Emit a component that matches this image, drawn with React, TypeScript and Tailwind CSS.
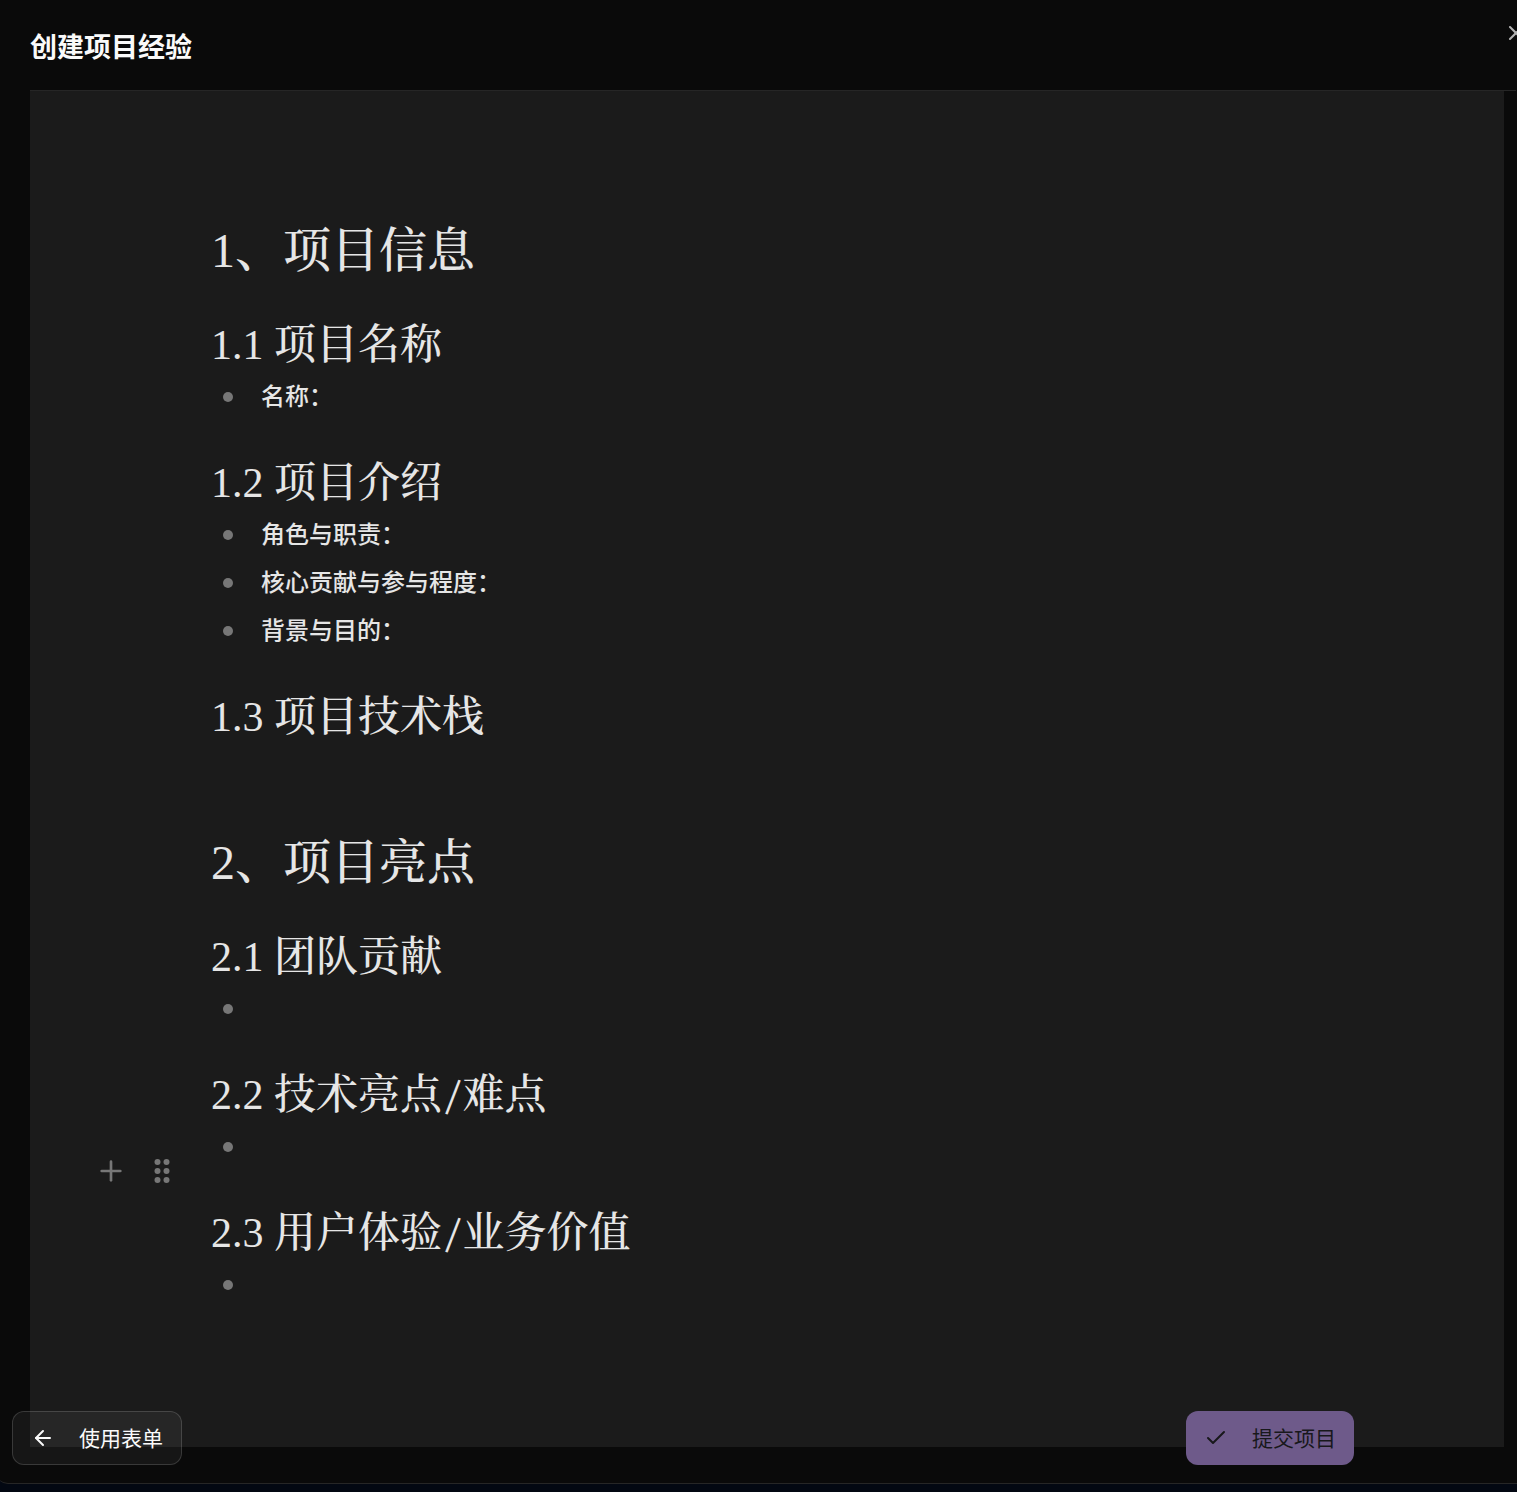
import { ArrowLeft, Check, Plus, X } from "lucide-react";

type Block = { number: string; title: string; items: string[]; handle?: boolean };
type Chapter = { number: string; title: string; blocks: Block[] };

const chapters: Chapter[] = [
  {
    number: "1",
    title: "、项目信息",
    blocks: [
      { number: "1.1 ", title: "项目名称", items: ["名称："] },
      { number: "1.2 ", title: "项目介绍", items: ["角色与职责：", "核心贡献与参与程度：", "背景与目的："] },
      { number: "1.3 ", title: "项目技术栈", items: [] },
    ],
  },
  {
    number: "2",
    title: "、项目亮点",
    blocks: [
      { number: "2.1 ", title: "团队贡献", items: [""] },
      { number: "2.2 ", title: "技术亮点/难点", items: [""] },
      { number: "2.3 ", title: "用户体验/业务价值", items: [""], handle: true },
    ],
  },
];

function DragDots() {
  return (
    <svg viewBox="0 0 16 24" className="h-6 w-4" fill="currentColor" aria-hidden="true">
      {[3, 12, 21].map((y) => (
        <g key={y}>
          <circle cx="3.5" cy={y} r="3" />
          <circle cx="12.5" cy={y} r="3" />
        </g>
      ))}
    </svg>
  );
}

function BlockHandle() {
  return (
    <div className="absolute -top-[18px] right-full mr-[31px] flex items-center gap-[15px] text-[#777777]">
      <button type="button" aria-label="添加块" className="flex size-9 items-center justify-center">
        <Plus className="size-8" strokeWidth={2} />
      </button>
      <button type="button" aria-label="拖动块" className="flex size-9 items-center justify-center">
        <DragDots />
      </button>
    </div>
  );
}

function Section({ block }: { block: Block }) {
  return (
    <section className="relative">
      {block.handle && <BlockHandle />}
      <h3 className="pt-9 font-['Cambria','Noto_Serif_CJK_SC','Noto_Sans_CJK_SC',serif] text-[42px] leading-[54px] font-medium">
        <span className="font-['Liberation_Serif',serif] leading-none">{block.number}</span>
        {block.title}
      </h3>
      {block.items.length > 0 ? (
        <ul>
          {block.items.map((item, i) => (
            <li key={i} className="flex h-12 items-center gap-7 pl-3">
              <span className="size-[10px] shrink-0 rounded-full bg-[#777777]" />
              <span className="pb-1 text-2xl font-medium">{item}</span>
            </li>
          ))}
        </ul>
      ) : (
        <p className="h-9" />
      )}
    </section>
  );
}

export default function App() {
  return (
    <div className="min-h-screen overflow-hidden bg-[#030812] pb-2 font-['Noto_Sans_CJK_SC',sans-serif]">
      <div
        role="dialog"
        aria-labelledby="dialog-title"
        className="relative -ml-1 flex min-h-[calc(100vh-8px)] flex-col rounded-bl-xl border-b border-[#262626] bg-[#0a0a0a] pr-px pb-9 pl-[34px]"
      >
        <header className="flex h-[91px] items-center border-b border-[#262626] pt-0.5">
          <h1 id="dialog-title" className="text-[27px] leading-9 font-bold text-[#fafafa]">
            创建项目经验
          </h1>
        </header>
        <button type="button" aria-label="关闭" className="absolute top-[21px] -right-[11px] text-[#b4b4b4]">
          <X className="size-6" strokeWidth={2} />
        </button>

        <main className="mr-3 flex-1 bg-[#1b1b1b] px-[181px] pt-[130px] pb-[120px] text-[#e6e6e6]">
          {chapters.map((chapter, i) => (
            <article key={chapter.title} className={i > 0 ? "pt-[52px]" : ""}>
              <h2 className="font-['Cambria','Noto_Serif_CJK_SC','Noto_Sans_CJK_SC',serif] text-5xl leading-[62px] font-medium">
                <span className="font-['Liberation_Serif',serif] leading-none">{chapter.number}</span>
                {chapter.title}
              </h2>
              {chapter.blocks.map((block) => (
                <Section key={block.title} block={block} />
              ))}
            </article>
          ))}
        </main>

        <footer className="absolute right-[163px] bottom-[18px] left-4 flex justify-between text-[21px]">
          <button
            type="button"
            className="flex h-[54px] items-center gap-6 rounded-xl border border-white/15 bg-white/5 px-[18px] text-[#fafafa]"
          >
            <ArrowLeft className="size-6" strokeWidth={2} />
            使用表单
          </button>
          <button
            type="button"
            className="flex h-[54px] items-center gap-6 rounded-xl bg-[#6e5a8a] px-[18px] text-[#18181b]"
          >
            <Check className="size-6" strokeWidth={2} />
            提交项目
          </button>
        </footer>
      </div>
    </div>
  );
}
